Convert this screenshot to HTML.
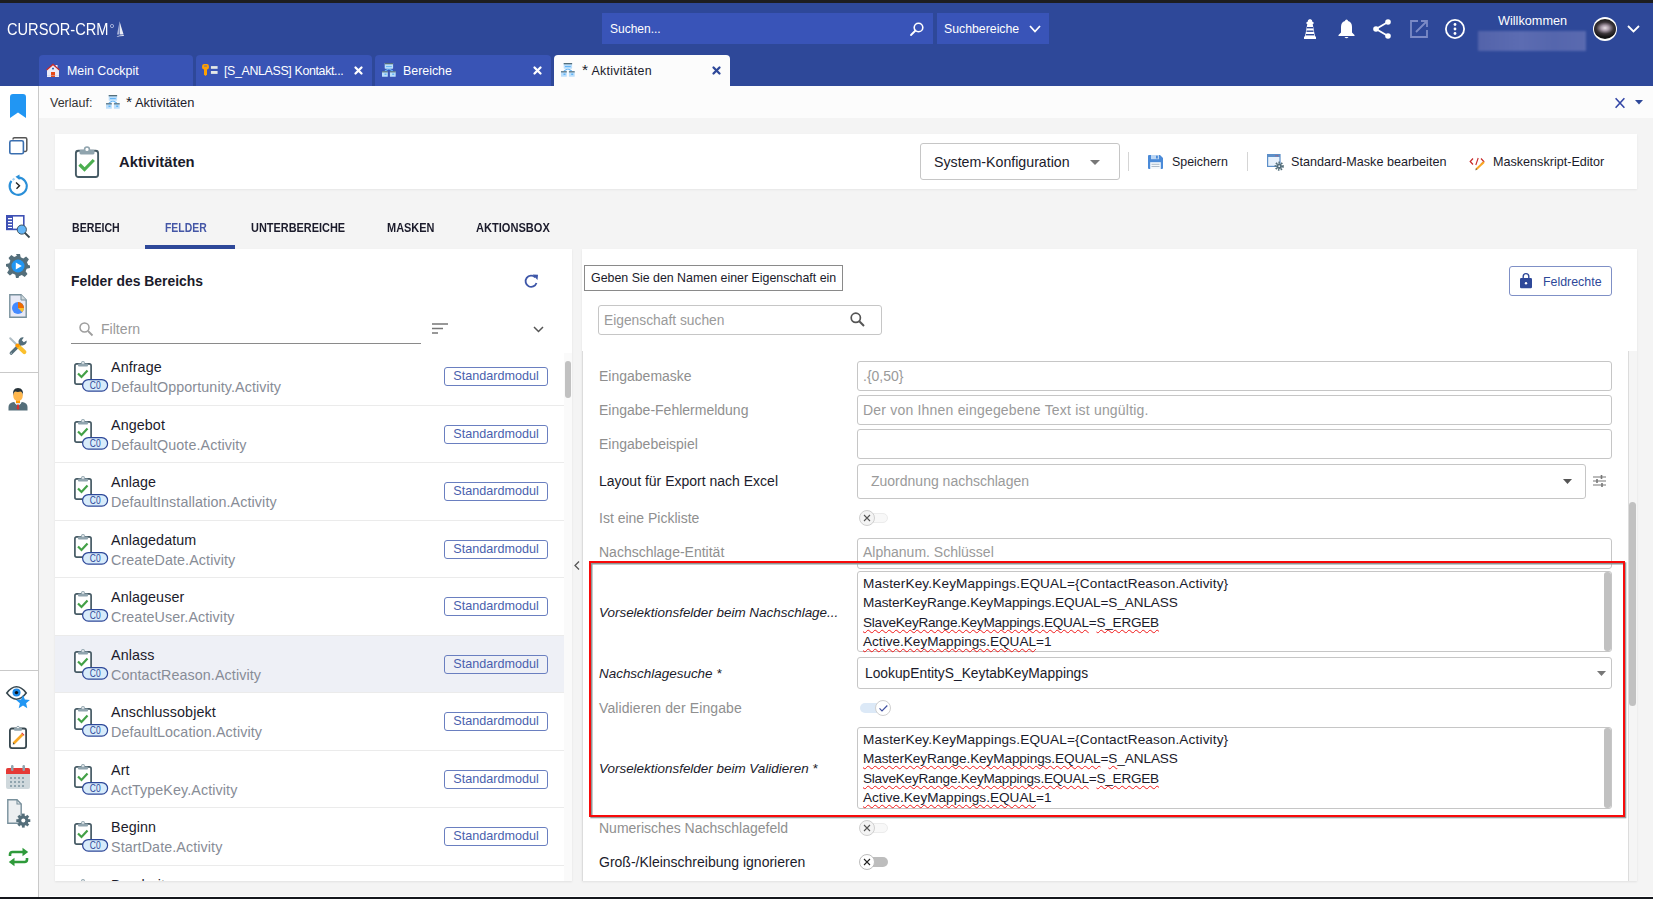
<!DOCTYPE html>
<html><head><meta charset="utf-8">
<style>
*{box-sizing:border-box;margin:0;padding:0}
html,body{width:1653px;height:899px;overflow:hidden;background:#f4f4f4;font-family:"Liberation Sans",sans-serif;color:#1b1b2b}
.a{position:absolute}
svg{position:absolute;overflow:visible}
.t{position:absolute;white-space:nowrap;line-height:1}
.tab{position:absolute;top:55px;height:31px;background:#3954b5;border-radius:4px 4px 0 0}
.tab .lbl{position:absolute;top:10px;font-size:12.4px;color:#fff;line-height:1;white-space:nowrap}
.tab svg{top:0;left:0}
.card{position:absolute;background:#fff}
.inp{position:absolute;border:1px solid #c6c6c6;border-radius:3px;background:#fff}
.lab{position:absolute;left:599px;font-size:14px;color:#8f8f8f;white-space:nowrap;line-height:1}
.lab.d{color:#1b1b2b}
.lab.i{font-style:italic;color:#1b1b2b;font-size:13.45px}
.val{position:absolute;left:863px;font-size:14px;color:#9a9a9a;white-space:nowrap;line-height:1}
.row{position:absolute;left:0;width:509px;border-bottom:1px solid #ebebeb}
.row .ti{position:absolute;left:56px;top:12px;font-size:14.3px;color:#1b1b2b;line-height:1;white-space:nowrap;letter-spacing:0.1px}
.row .su{position:absolute;left:56px;top:32px;font-size:14.3px;color:#878c96;line-height:1;white-space:nowrap;letter-spacing:0.1px}
.row .bd{position:absolute;left:389px;top:19px;width:104px;height:19px;border:1px solid #6a7fc0;border-radius:3px;font-size:12.6px;color:#4a5fae;line-height:17px;text-align:center;white-space:nowrap}
.row svg{left:19px;top:13px}
.w{text-decoration:underline wavy #f01818;text-decoration-thickness:1.3px;text-underline-offset:2px;text-decoration-skip-ink:none}
</style></head><body>
<div class="a" style="left:0;top:0;width:1653px;height:3px;background:#1d1d1f"></div>
<div class="a" style="left:0;top:3px;width:1653px;height:83px;background:#2e4899"></div>
<div class="a" style="left:0;top:896px;width:1653px;height:1px;background:#fff"></div><div class="a" style="left:0;top:897px;width:1653px;height:2px;background:#15171c"></div>

<!-- logo -->
<div class="t" style="left:7px;top:21px;font-size:16.5px;color:#fff;transform-origin:0 0;transform:scaleX(0.886)">CURSOR-CRM</div>
<div class="a" style="left:110px;top:24px;width:3.5px;height:3.5px;border-radius:50%;border:0.8px solid #b8c2e4"></div>
<svg style="left:115px;top:21px" width="10" height="17" viewBox="0 0 10 17"><path d="M4.5 0.3 L8.6 13.5 L4.8 13.5 Z" fill="#fff" opacity="0.9"/><path d="M4.3 2 L2 13.5 L4.3 13.5 Z" fill="#c9d0ea" opacity="0.8"/><path d="M0.3 15.8 Q4.5 14 9.2 14 L8.4 15 Q4.5 15.3 0.3 15.8 Z" fill="#fff"/></svg>

<!-- search -->
<div class="a" style="left:602px;top:13px;width:331px;height:31px;background:#3954b8"></div>
<div class="t" style="left:610px;top:23px;font-size:12px;color:#fff">Suchen...</div>
<svg style="left:910px;top:22px" width="14" height="14" viewBox="0 0 14 14"><circle cx="8.5" cy="5.5" r="4.3" fill="none" stroke="#fff" stroke-width="1.6"/><path d="M5.5 8.5 L1 13" stroke="#fff" stroke-width="1.8" stroke-linecap="round"/></svg>
<div class="a" style="left:937px;top:13px;width:112px;height:31px;background:#3954b8"></div>
<div class="t" style="left:944px;top:23px;font-size:12.3px;color:#fff">Suchbereiche</div>
<svg style="left:1029px;top:25px" width="12" height="8" viewBox="0 0 12 8"><path d="M1 1 L6 6.5 L11 1" fill="none" stroke="#fff" stroke-width="1.8"/></svg>

<!-- header right icons -->
<svg style="left:1304px;top:19px" width="12" height="20" viewBox="0 0 12 20"><path d="M6 0 Q8.5 0.5 8.5 3 L9.5 3 L9.5 5 L8.7 5 L11 17.5 L12 17.5 L12 20 L0 20 L0 17.5 L1 17.5 L3.3 5 L2.5 5 L2.5 3 L3.5 3 Q3.5 0.5 6 0 Z" fill="#fff"/><rect x="3" y="8" width="6" height="1.4" fill="#2e4899"/><rect x="2.5" y="11.5" width="7" height="1.4" fill="#2e4899"/><rect x="2" y="15" width="8" height="1.4" fill="#2e4899"/></svg>
<svg style="left:1338px;top:19px" width="17" height="20" viewBox="0 0 17 20"><path d="M8.5 0.5 Q10 0.5 10 2 Q14 3 14 8 L14 13.5 L16.5 16 L16.5 17 L0.5 17 L0.5 16 L3 13.5 L3 8 Q3 3 7 2 Q7 0.5 8.5 0.5 Z" fill="#fff"/><path d="M6.5 18 Q8.5 20.5 10.5 18 Z" fill="#fff"/></svg>
<svg style="left:1373px;top:19px" width="18" height="20" viewBox="0 0 18 20"><circle cx="15" cy="3" r="2.8" fill="#fff"/><circle cx="3" cy="10" r="2.8" fill="#fff"/><circle cx="15" cy="17" r="2.8" fill="#fff"/><path d="M15 3 L3 10 L15 17" fill="none" stroke="#fff" stroke-width="1.8"/></svg>
<svg style="left:1410px;top:20px" width="18" height="18" viewBox="0 0 18 18"><path d="M8 1 H1 V17 H17 V10" fill="none" stroke="#7b8ac6" stroke-width="1.8"/><path d="M11 1 H17 V7 M17 1 L6 12" fill="none" stroke="#7b8ac6" stroke-width="1.8"/></svg>
<svg style="left:1445px;top:19px" width="20" height="20" viewBox="0 0 20 20"><circle cx="10" cy="10" r="9.1" fill="none" stroke="#fff" stroke-width="1.8"/><circle cx="10" cy="5.5" r="1.4" fill="#fff"/><circle cx="10" cy="10" r="1.4" fill="#fff"/><circle cx="10" cy="14.5" r="1.4" fill="#fff"/></svg>
<div class="t" style="left:1498px;top:15px;font-size:12.7px;color:#fff">Willkommen</div>
<div class="a" style="left:1478px;top:31px;width:108px;height:20px;background:linear-gradient(90deg,#5363aa,#5c6cb2 40%,#5566ad 70%,#5a6ab0);filter:blur(1.2px)"></div>
<div class="a" style="left:1593px;top:17px;width:24px;height:24px;border-radius:50%;background:#fff"></div>
<div class="a" style="left:1594px;top:19px;width:22px;height:20px;border-radius:50%;background:radial-gradient(ellipse 60% 45% at 50% 45%,#e8e0e4 0,#a89aa8 30%,#3a3438 65%,#141414 100%)"></div>
<svg style="left:1627px;top:25px" width="13" height="8" viewBox="0 0 13 8"><path d="M1 1 L6.5 6.5 L12 1" fill="none" stroke="#fff" stroke-width="1.8"/></svg>

<!-- tabs -->
<div class="tab" style="left:39px;width:154px"><span class="lbl" style="left:28px">Mein Cockpit</span>
<svg style="left:7px;top:8px" width="14" height="14" viewBox="0 0 14 14"><rect x="9.5" y="2" width="2" height="3" fill="#eef"/><path d="M0.8 6.8 L1 7.2 V14 H13 V7.2 L13.2 6.8 L7 1.3 Z" fill="#ecebf6"/><path d="M0.2 6.6 L7 0.6 L13.8 6.6 L13 7.4 L7 2.2 L1 7.4 Z" fill="#c62828"/><rect x="6.2" y="4.8" width="1.6" height="1.6" fill="#0d47a1"/><rect x="5" y="9" width="4" height="5" fill="#e64a19"/><rect x="1" y="12.2" width="12" height="0.8" fill="#c5cae9" opacity="0.6"/></svg></div>
<div class="tab" style="left:196px;width:176px"><span class="lbl" style="left:28px;letter-spacing:-0.35px">[S_ANLASS] Kontakt...</span>
<svg style="left:6px;top:9px" width="16" height="12" viewBox="0 0 16 12"><rect x="0.1" y="0" width="6.8" height="5.6" rx="2" fill="#ffa000"/><rect x="2" y="1.6" width="3" height="1" rx="0.5" fill="#5a6db8"/><path d="M2 5 H5 V10.6 L3.5 11.9 L2 10.6 Z" fill="#ffa000"/><rect x="8.9" y="2.1" width="6.7" height="2.7" fill="#e4e8e6"/><rect x="8.9" y="7" width="6.7" height="2.9" fill="#e4e8e6"/></svg>
<svg style="left:158px;top:11px" width="9" height="9" viewBox="0 0 9 9"><path d="M1.5 1.5 L7.5 7.5 M7.5 1.5 L1.5 7.5" stroke="#fff" stroke-width="2.3" stroke-linecap="round"/></svg></div>
<div class="tab" style="left:375px;width:176px"><span class="lbl" style="left:28px">Bereiche</span>
<svg style="left:7px;top:8px" width="14" height="14" viewBox="0 0 14 14"><path d="M6.9 5.7 L2.9 8 M6.9 5.7 L10.8 8" stroke="#64b5f6" stroke-width="1.1"/><rect x="2.7" y="0" width="8.4" height="5.7" rx="0.6" fill="#bbdefb"/><rect x="2.7" y="0" width="8.4" height="1.3" fill="#546e7a"/><rect x="4" y="3" width="5.8" height="1.1" fill="#64b5f6"/><rect x="0" y="8.2" width="5.8" height="5.6" rx="0.6" fill="#bbdefb"/><rect x="0" y="8.2" width="5.8" height="1.2" fill="#546e7a"/><rect x="2.5" y="10.5" width="2" height="1.5" fill="#64b5f6"/><rect x="7.9" y="8.2" width="5.8" height="5.6" rx="0.6" fill="#bbdefb"/><rect x="7.9" y="8.2" width="5.8" height="1.2" fill="#546e7a"/><rect x="10.2" y="10.5" width="2" height="1.5" fill="#64b5f6"/></svg>
<svg style="left:158px;top:11px" width="9" height="9" viewBox="0 0 9 9"><path d="M1.5 1.5 L7.5 7.5 M7.5 1.5 L1.5 7.5" stroke="#fff" stroke-width="2.3" stroke-linecap="round"/></svg></div>
<div class="tab" style="left:554px;width:176px;background:#fcfcfc"><span class="lbl" style="left:28px;color:#1b1b2b;letter-spacing:0.3px"><span style="font-size:15.5px;line-height:10px">*</span> Aktivitäten</span>
<svg style="left:7px;top:8px" width="14" height="14" viewBox="0 0 14 14"><path d="M6.9 5.7 L2.9 8 M6.9 5.7 L10.8 8" stroke="#64b5f6" stroke-width="1.1"/><rect x="2.7" y="0" width="8.4" height="5.7" rx="0.6" fill="#bbdefb"/><rect x="2.7" y="0" width="8.4" height="1.3" fill="#546e7a"/><rect x="4" y="3" width="5.8" height="1.1" fill="#64b5f6"/><rect x="0" y="8.2" width="5.8" height="5.6" rx="0.6" fill="#bbdefb"/><rect x="0" y="8.2" width="5.8" height="1.2" fill="#546e7a"/><rect x="2.5" y="10.5" width="2" height="1.5" fill="#64b5f6"/><rect x="7.9" y="8.2" width="5.8" height="5.6" rx="0.6" fill="#bbdefb"/><rect x="7.9" y="8.2" width="5.8" height="1.2" fill="#546e7a"/><rect x="10.2" y="10.5" width="2" height="1.5" fill="#64b5f6"/></svg>
<svg style="left:158px;top:10.5px" width="9" height="9" viewBox="0 0 9 9"><path d="M1.5 1.5 L7.5 7.5 M7.5 1.5 L1.5 7.5" stroke="#2e4899" stroke-width="2.3" stroke-linecap="round"/></svg></div>

<!-- sidebar -->
<div class="a" style="left:0;top:86px;width:39px;height:811px;background:#fff;border-right:1px solid #c9c9c9"></div>
<div class="a" style="left:0;top:372px;width:38px;height:1px;background:#c9c9c9"></div>
<div class="a" style="left:0;top:670px;width:38px;height:1px;background:#c9c9c9"></div>
<svg style="left:10px;top:94px" width="16" height="24" viewBox="0 0 16 24"><path d="M0 3 Q0 0 3 0 H13 Q16 0 16 3 V24 L8 18.5 L0 24 Z" fill="#2196f3"/></svg>
<svg style="left:8px;top:137px" width="20" height="18" viewBox="0 0 20 18"><path d="M5 2.5 V2.2 Q5 0.8 6.4 0.8 H17.4 Q18.8 0.8 18.8 2.2 V13 Q18.8 14.4 17.4 14.4 H16" fill="none" stroke="#555" stroke-width="1.5"/><rect x="1.8" y="3.8" width="13.6" height="13" rx="1.6" fill="#fff" stroke="#3a6fb0" stroke-width="1.6"/></svg>
<svg style="left:7px;top:175px" width="22" height="22" viewBox="0 0 22 22"><path d="M11.5 2.6 A8.6 8.6 0 1 1 4.5 5.8" fill="none" stroke="#2a8fd8" stroke-width="2.1"/><path d="M8.5 1.8 L12.5 -0.5 L12.5 5 Z" fill="#2a8fd8"/><path d="M5.6 5 L7.5 3.6" stroke="#9fd0f3" stroke-width="2"/><path d="M9 7.5 L12.5 10.8 L9.5 13.8" fill="none" stroke="#222" stroke-width="1.4"/></svg>
<svg style="left:6px;top:215px" width="25" height="23" viewBox="0 0 25 23"><rect x="0.8" y="0.8" width="17" height="13.6" fill="#fff" stroke="#3f51b5" stroke-width="1.6"/><rect x="0.8" y="0.8" width="6.2" height="13.6" fill="#3f51b5"/><g fill="#fff"><rect x="2" y="3" width="4" height="1.3"/><rect x="2" y="6" width="4" height="1.3"/><rect x="2" y="9" width="4" height="1.3"/><rect x="2" y="12" width="4" height="1"/></g><path d="M18.5 17.5 L23.5 22.5" stroke="#37474f" stroke-width="1.8"/><circle cx="15.8" cy="14.6" r="4.6" fill="#64b5f6" stroke="#37474f" stroke-width="0.9"/></svg>
<svg style="left:6px;top:254px" width="24" height="24" viewBox="0 0 24 24"><path d="M10 0 H14 L14.7 3.3 L17.3 4.4 L20.1 2.5 L22.9 5.3 L21 8.2 L22.2 10.9 L24 11.5 V12.5 L24 14 L20.7 14.7 L19.6 17.3 L21.5 20.1 L18.7 22.9 L15.8 21 L13.1 22.2 L12.5 24 H10 L9.3 20.7 L6.7 19.6 L3.9 21.5 L1.1 18.7 L3 15.8 L1.8 13.1 L0 12.5 V10 L3.3 9.3 L4.4 6.7 L2.5 3.9 L5.3 1.1 L8.2 3 L10.9 1.8 Z" fill="#546e7a"/><circle cx="12" cy="12" r="6.5" fill="#2196f3"/><path d="M9.8 8.5 L15.8 12 L9.8 15.5 Z" fill="#fff"/></svg>
<svg style="left:9px;top:294px" width="18" height="24" viewBox="0 0 18 24"><path d="M0.8 0.8 H12 L17.2 6 V23.2 H0.8 Z" fill="#e8eaf6" stroke="#78909c" stroke-width="1.4"/><path d="M12 0.8 V6 H17.2" fill="#cfd8dc" stroke="#78909c" stroke-width="1"/><circle cx="9" cy="14" r="6" fill="#448aff"/><path d="M9 14 V8 A6 6 0 0 1 15 14 Z" fill="#ef6c00"/><path d="M9 14 H15 A6 6 0 0 1 13.2 18.3 Z" fill="#fbc02d"/></svg>
<svg style="left:9px;top:337px" width="18" height="18" viewBox="0 0 18 18"><path d="M2.2 16.2 L12 6.4" stroke="#546e7a" stroke-width="3.2" stroke-linecap="round"/><circle cx="2.2" cy="16.2" r="0.7" fill="#b0bec5"/><path d="M10.6 7.4 A4.3 4.3 0 0 1 14.8 0.4 L12.8 3.2 L14.8 5.2 L17.6 3.4 A4.3 4.3 0 0 1 10.6 7.4 Z" fill="#546e7a"/><path d="M1.2 1.2 L7.5 7.5" stroke="#b0bec5" stroke-width="2" stroke-linecap="round"/><path d="M9.5 9.5 L15.3 15" stroke="#fbc02d" stroke-width="4.2" stroke-linecap="round"/><circle cx="8.5" cy="8.5" r="2.1" fill="#ff9800"/></svg>
<svg style="left:8px;top:387px" width="20" height="24" viewBox="0 0 20 24"><path d="M0.5 23.5 V20 Q0.5 16 5.5 15 L10 17 L14.5 15 Q19.5 16 19.5 20 V23.5 Z" fill="#546e7a"/><path d="M7 15 L10 17.5 L13 15 L13 16.5 L10 19 L7 16.5 Z" fill="#fff"/><path d="M9.2 17.5 L10.8 17.5 L11.3 21.5 L10 23 L8.7 21.5 Z" fill="#d32f2f"/><rect x="8" y="12" width="4" height="4" fill="#ff9800"/><ellipse cx="10" cy="8.6" rx="4.8" ry="5.6" fill="#ffb74d"/><path d="M5 8.5 Q4.2 1 10 1 Q15.8 1 15 8.5 Q14.5 5 12.5 4.6 Q10 5.5 7.2 4.6 Q5.5 5 5 8.5 Z" fill="#263238"/></svg>
<svg style="left:6px;top:686px" width="25" height="24" viewBox="0 0 25 24"><path d="M0.8 7 Q5.5 0.8 10.5 0.8 Q15.5 0.8 20.2 7 Q15.5 13.2 10.5 13.2 Q5.5 13.2 0.8 7 Z" fill="#fff" stroke="#37474f" stroke-width="1.6"/><circle cx="10.5" cy="6.6" r="4" fill="#1e88e5"/><circle cx="10.5" cy="6.6" r="1.7" fill="#111"/><path d="M17 9 L18.9 13.6 L23.9 14 L20.1 17.2 L21.3 22.2 L17 19.5 L12.7 22.2 L13.9 17.2 L10.1 14 L15.1 13.6 Z" fill="#2196f3"/></svg>
<svg style="left:9px;top:726px" width="18" height="23" viewBox="0 0 18 23"><rect x="0.9" y="2.5" width="16.2" height="19.6" rx="2" fill="#fff" stroke="#37474f" stroke-width="1.8"/><rect x="5" y="1.8" width="8" height="3" rx="1" fill="#90a4ae"/><circle cx="9" cy="1.6" r="1.3" fill="#fff" stroke="#90a4ae" stroke-width="1"/><path d="M4.5 17.5 L13.5 8.5" stroke="#f9a825" stroke-width="2.6"/><path d="M12.3 7.3 L14.7 9.7 L15.5 8.9 L13.1 6.5 Z" fill="#e53935"/><path d="M3.8 18.5 L4.2 16.5 L5.6 17.9 Z" fill="#37474f"/></svg>
<svg style="left:6px;top:765px" width="24" height="24" viewBox="0 0 24 24"><rect x="0" y="3" width="24" height="21" rx="2" fill="#cfd8dc"/><path d="M0 5 Q0 3 2 3 H22 Q24 3 24 5 V9 H0 Z" fill="#e53935"/><rect x="5" y="0" width="2.5" height="6" rx="1.2" fill="#90a4ae"/><rect x="16.5" y="0" width="2.5" height="6" rx="1.2" fill="#90a4ae"/><g fill="#90a4ae"><rect x="4" y="12" width="2" height="2"/><rect x="8" y="12" width="2" height="2"/><rect x="12" y="12" width="2" height="2"/><rect x="16" y="12" width="2" height="2"/><rect x="4" y="16" width="2" height="2"/><rect x="8" y="16" width="2" height="2"/><rect x="12" y="16" width="2" height="2"/><rect x="16" y="16" width="2" height="2"/><rect x="4" y="20" width="2" height="2"/><rect x="8" y="20" width="2" height="2"/><rect x="12" y="20" width="2" height="2"/><rect x="16" y="20" width="2" height="2"/></g></svg>
<svg style="left:7px;top:799px" width="24" height="30" viewBox="0 0 24 30"><path d="M0.8 0.8 H10 L14.2 5 V24.2 H0.8 Z" fill="#eceff1" stroke="#78909c" stroke-width="1.4"/><path d="M10 0.8 V5 H14.2" fill="none" stroke="#78909c" stroke-width="1.1"/><g transform="translate(16.3 21.6)"><circle r="5.2" fill="#546e7a"/><g fill="#546e7a"><rect x="-1.4" y="-7" width="2.8" height="14"/><rect x="-7" y="-1.4" width="14" height="2.8"/><rect x="-1.4" y="-7" width="2.8" height="14" transform="rotate(45)"/><rect x="-1.4" y="-7" width="2.8" height="14" transform="rotate(-45)"/></g><circle r="2" fill="#fff"/></g></svg>
<svg style="left:8px;top:847px" width="21" height="20" viewBox="0 0 21 20"><path d="M2 9 V7.5 Q2 5 4.5 5 H16" fill="none" stroke="#2e9a3a" stroke-width="2.6"/><path d="M14.5 0.8 L20.2 5 L14.5 9.2 Z" fill="#2e9a3a"/><path d="M19 11 V12.5 Q19 15 16.5 15 H5" fill="none" stroke="#2e9a3a" stroke-width="2.6"/><path d="M6.5 10.8 L0.8 15 L6.5 19.2 Z" fill="#2e9a3a"/></svg>

<!-- verlauf -->
<div class="a" style="left:39px;top:86px;width:1614px;height:32px;background:#fcfcfc"></div>
<div class="t" style="left:50px;top:97px;font-size:12.5px;color:#333">Verlauf:</div>
<svg style="left:106px;top:95px" width="14" height="14" viewBox="0 0 14 14"><path d="M6.9 5.7 L2.9 8 M6.9 5.7 L10.8 8" stroke="#64b5f6" stroke-width="1.1"/><rect x="2.7" y="0" width="8.4" height="5.7" rx="0.6" fill="#bbdefb"/><rect x="2.7" y="0" width="8.4" height="1.3" fill="#546e7a"/><rect x="4" y="3" width="5.8" height="1.1" fill="#64b5f6"/><rect x="0" y="8.2" width="5.8" height="5.6" rx="0.6" fill="#bbdefb"/><rect x="0" y="8.2" width="5.8" height="1.2" fill="#546e7a"/><rect x="2.5" y="10.5" width="2" height="1.5" fill="#64b5f6"/><rect x="7.9" y="8.2" width="5.8" height="5.6" rx="0.6" fill="#bbdefb"/><rect x="7.9" y="8.2" width="5.8" height="1.2" fill="#546e7a"/><rect x="10.2" y="10.5" width="2" height="1.5" fill="#64b5f6"/></svg>
<div class="t" style="left:126px;top:97px;font-size:12.9px;color:#1b1b2b"><span style="font-size:15.5px;line-height:10px">*</span> Aktivitäten</div>
<svg style="left:1615px;top:98px" width="10" height="10" viewBox="0 0 10 10"><path d="M0.6 0.3 L9.4 9.7 M9.4 0.3 L0.6 9.7" stroke="#3346a6" stroke-width="1.6"/></svg>
<svg style="left:1635px;top:100px" width="8" height="5" viewBox="0 0 8 5"><path d="M0 0 H8 L4 4.5 Z" fill="#2e4899"/></svg>

<!-- header card -->
<div class="card" style="left:55px;top:134px;width:1582px;height:55px;box-shadow:0 1px 2px rgba(0,0,0,0.06)"></div>
<svg style="left:74px;top:146px" width="26" height="32" viewBox="0 0 26 32"><rect x="1.9" y="4.8" width="22.2" height="26.2" rx="2.5" fill="#fff" stroke="#455a64" stroke-width="1.9"/><rect x="5.5" y="3.8" width="15" height="4.6" rx="1.3" fill="#90a4ae"/><circle cx="13" cy="3.4" r="2.4" fill="#fff" stroke="#90a4ae" stroke-width="1.6"/><path d="M5.5 18.5 L10.5 23.5 L19.8 14" fill="none" stroke="#4caf50" stroke-width="3.2"/></svg>
<div class="t" style="left:119px;top:155px;font-size:14.8px;font-weight:bold">Aktivitäten</div>
<div class="a" style="left:920px;top:143px;width:200px;height:37px;border:1px solid #c6c6c6;border-radius:3px;background:#fff"></div>
<div class="t" style="left:934px;top:155px;font-size:14.2px">System-Konfiguration</div>
<svg style="left:1090px;top:160px" width="10" height="5" viewBox="0 0 10 5"><path d="M0 0 H10 L5 5 Z" fill="#777"/></svg>
<div class="a" style="left:1128px;top:152px;width:1px;height:19px;background:#d5d5d5"></div>
<svg style="left:1148px;top:155px" width="15" height="14" viewBox="0 0 15 14"><path d="M0 1 Q0 0 1 0 H12 L15 3 V13 Q15 14 14 14 H1 Q0 14 0 13 Z" fill="#4a8ad8"/><rect x="3" y="0" width="8" height="4.2" fill="#bcd6f3"/><rect x="8" y="0.7" width="1.8" height="2.8" fill="#4a8ad8"/><rect x="2.2" y="7.2" width="10.6" height="6.8" fill="#f4f8fc"/><path d="M3.5 9.3 H11.5 M3.5 11.5 H11.5" stroke="#9ab" stroke-width="0.8"/></svg>
<div class="t" style="left:1172px;top:156px;font-size:12.4px">Speichern</div>
<div class="a" style="left:1247px;top:152px;width:1px;height:19px;background:#d5d5d5"></div>
<svg style="left:1267px;top:154px" width="17" height="17" viewBox="0 0 17 17"><rect x="0.6" y="0.6" width="12.4" height="11.8" fill="#e8f1fb" stroke="#5c8fc9" stroke-width="1.2"/><rect x="0.6" y="0.6" width="12.4" height="2.4" fill="#5c8fc9"/><circle cx="9" cy="1.8" r="0.5" fill="#e53935"/><circle cx="10.8" cy="1.8" r="0.5" fill="#e53935"/><circle cx="12.2" cy="12.2" r="3.7" fill="none" stroke="#546e7a" stroke-width="1.8" stroke-dasharray="1.5 1.2"/><circle cx="12.2" cy="12.2" r="2.7" fill="#546e7a"/><circle cx="12.2" cy="12.2" r="0.9" fill="#e8f1fb"/></svg>
<div class="t" style="left:1291px;top:156px;font-size:12.6px">Standard-Maske bearbeiten</div>
<svg style="left:1469px;top:157px" width="17" height="14" viewBox="0 0 17 14"><path d="M4 1.5 L1.2 4.5 L4 7.5" fill="none" stroke="#c62828" stroke-width="1.2"/><path d="M12 1.5 L14.8 4.5 L12 7.5" fill="none" stroke="#c62828" stroke-width="1.2"/><path d="M6.8 8 L9.2 1" stroke="#c62828" stroke-width="1.1"/><path d="M7 12.5 L15 5" stroke="#f9a825" stroke-width="2"/><path d="M6 13.5 L7.3 11.2 L8.2 12.2 Z" fill="#555"/></svg>
<div class="t" style="left:1493px;top:156px;font-size:12.6px">Maskenskript-Editor</div>

<!-- tabs row -->
<div class="t" style="left:72px;top:222px;font-size:12.3px;font-weight:bold;transform-origin:0 0;transform:scaleX(0.862);color:#1b1b2b">BEREICH</div>
<div class="t" style="left:165px;top:222px;font-size:12.3px;font-weight:bold;transform-origin:0 0;transform:scaleX(0.848);color:#4456a6">FELDER</div>
<div class="t" style="left:251px;top:222px;font-size:12.3px;font-weight:bold;transform-origin:0 0;transform:scaleX(0.889);color:#1b1b2b">UNTERBEREICHE</div>
<div class="t" style="left:387px;top:222px;font-size:12.3px;font-weight:bold;transform-origin:0 0;transform:scaleX(0.891);color:#1b1b2b">MASKEN</div>
<div class="t" style="left:476px;top:222px;font-size:12.3px;font-weight:bold;transform-origin:0 0;transform:scaleX(0.901);color:#1b1b2b">AKTIONSBOX</div>
<div class="a" style="left:145px;top:245px;width:90px;height:4px;background:#2e4899"></div>

<!-- left panel -->
<div class="card" style="left:55px;top:249px;width:517px;height:632px;box-shadow:0 1px 2px rgba(0,0,0,0.08)"></div>
<div class="t" style="left:71px;top:275px;font-size:13.9px;font-weight:bold">Felder des Bereichs</div>
<svg style="left:524px;top:274px" width="15" height="15" viewBox="0 0 15 15"><path d="M12.5 9 A5.6 5.6 0 1 1 11.2 3.3" fill="none" stroke="#3d56a8" stroke-width="1.8"/><path d="M8.5 0.5 L14 0.8 L13.5 6 Z" fill="#3d56a8"/></svg>
<svg style="left:79px;top:322px" width="14" height="14" viewBox="0 0 14 14"><circle cx="5.5" cy="5.5" r="4.5" fill="none" stroke="#9e9e9e" stroke-width="1.5"/><path d="M9 9 L13.5 13.5" stroke="#9e9e9e" stroke-width="1.8"/></svg>
<div class="t" style="left:101px;top:322px;font-size:14.1px;color:#9a9a9a">Filtern</div>
<div class="a" style="left:71px;top:343px;width:350px;height:1px;background:#8a8a8a"></div>
<svg style="left:432px;top:323px" width="16" height="11" viewBox="0 0 16 11"><path d="M0 1 H16 M0 5.5 H11 M0 10 H6" stroke="#777" stroke-width="1.5"/></svg>
<svg style="left:533px;top:326px" width="11" height="7" viewBox="0 0 11 7"><path d="M1 1 L5.5 5.5 L10 1" fill="none" stroke="#555" stroke-width="1.5"/></svg>
<!--ROWS-->
<div class="a" style="left:55px;top:348px;width:509px;height:533px;overflow:hidden">
<div class="row" style="top:0px;height:58px;background:#fff"><svg width="34" height="31" viewBox="0 0 34 31"><rect x="0.9" y="2.9" width="16.2" height="20.2" rx="1.8" fill="#fff" stroke="#455a64" stroke-width="1.7"/><rect x="4" y="2.4" width="10" height="3" rx="1" fill="#90a4ae"/><circle cx="9" cy="1.9" r="1.4" fill="#fff" stroke="#90a4ae" stroke-width="1.1"/><path d="M4 12.5 L7.5 16 L13.5 9.5" fill="none" stroke="#43a047" stroke-width="2.2"/><rect x="8.6" y="18.6" width="25" height="11.5" rx="5.75" fill="#d8ecfb" stroke="#2e4899" stroke-width="1.2"/><text x="15.8" y="27.9" font-family="Liberation Sans" font-size="10.4" fill="#2e4899" textLength="10.8" lengthAdjust="spacingAndGlyphs">C0</text></svg><div class="ti">Anfrage</div><div class="su">DefaultOpportunity.Activity</div><div class="bd">Standardmodul</div></div>
<div class="row" style="top:58px;height:57px;background:#fff"><svg width="34" height="31" viewBox="0 0 34 31"><rect x="0.9" y="2.9" width="16.2" height="20.2" rx="1.8" fill="#fff" stroke="#455a64" stroke-width="1.7"/><rect x="4" y="2.4" width="10" height="3" rx="1" fill="#90a4ae"/><circle cx="9" cy="1.9" r="1.4" fill="#fff" stroke="#90a4ae" stroke-width="1.1"/><path d="M4 12.5 L7.5 16 L13.5 9.5" fill="none" stroke="#43a047" stroke-width="2.2"/><rect x="8.6" y="18.6" width="25" height="11.5" rx="5.75" fill="#d8ecfb" stroke="#2e4899" stroke-width="1.2"/><text x="15.8" y="27.9" font-family="Liberation Sans" font-size="10.4" fill="#2e4899" textLength="10.8" lengthAdjust="spacingAndGlyphs">C0</text></svg><div class="ti">Angebot</div><div class="su">DefaultQuote.Activity</div><div class="bd">Standardmodul</div></div>
<div class="row" style="top:115px;height:58px;background:#fff"><svg width="34" height="31" viewBox="0 0 34 31"><rect x="0.9" y="2.9" width="16.2" height="20.2" rx="1.8" fill="#fff" stroke="#455a64" stroke-width="1.7"/><rect x="4" y="2.4" width="10" height="3" rx="1" fill="#90a4ae"/><circle cx="9" cy="1.9" r="1.4" fill="#fff" stroke="#90a4ae" stroke-width="1.1"/><path d="M4 12.5 L7.5 16 L13.5 9.5" fill="none" stroke="#43a047" stroke-width="2.2"/><rect x="8.6" y="18.6" width="25" height="11.5" rx="5.75" fill="#d8ecfb" stroke="#2e4899" stroke-width="1.2"/><text x="15.8" y="27.9" font-family="Liberation Sans" font-size="10.4" fill="#2e4899" textLength="10.8" lengthAdjust="spacingAndGlyphs">C0</text></svg><div class="ti">Anlage</div><div class="su">DefaultInstallation.Activity</div><div class="bd">Standardmodul</div></div>
<div class="row" style="top:173px;height:57px;background:#fff"><svg width="34" height="31" viewBox="0 0 34 31"><rect x="0.9" y="2.9" width="16.2" height="20.2" rx="1.8" fill="#fff" stroke="#455a64" stroke-width="1.7"/><rect x="4" y="2.4" width="10" height="3" rx="1" fill="#90a4ae"/><circle cx="9" cy="1.9" r="1.4" fill="#fff" stroke="#90a4ae" stroke-width="1.1"/><path d="M4 12.5 L7.5 16 L13.5 9.5" fill="none" stroke="#43a047" stroke-width="2.2"/><rect x="8.6" y="18.6" width="25" height="11.5" rx="5.75" fill="#d8ecfb" stroke="#2e4899" stroke-width="1.2"/><text x="15.8" y="27.9" font-family="Liberation Sans" font-size="10.4" fill="#2e4899" textLength="10.8" lengthAdjust="spacingAndGlyphs">C0</text></svg><div class="ti">Anlagedatum</div><div class="su">CreateDate.Activity</div><div class="bd">Standardmodul</div></div>
<div class="row" style="top:230px;height:58px;background:#fff"><svg width="34" height="31" viewBox="0 0 34 31"><rect x="0.9" y="2.9" width="16.2" height="20.2" rx="1.8" fill="#fff" stroke="#455a64" stroke-width="1.7"/><rect x="4" y="2.4" width="10" height="3" rx="1" fill="#90a4ae"/><circle cx="9" cy="1.9" r="1.4" fill="#fff" stroke="#90a4ae" stroke-width="1.1"/><path d="M4 12.5 L7.5 16 L13.5 9.5" fill="none" stroke="#43a047" stroke-width="2.2"/><rect x="8.6" y="18.6" width="25" height="11.5" rx="5.75" fill="#d8ecfb" stroke="#2e4899" stroke-width="1.2"/><text x="15.8" y="27.9" font-family="Liberation Sans" font-size="10.4" fill="#2e4899" textLength="10.8" lengthAdjust="spacingAndGlyphs">C0</text></svg><div class="ti">Anlageuser</div><div class="su">CreateUser.Activity</div><div class="bd">Standardmodul</div></div>
<div class="row" style="top:288px;height:57px;background:#eef0f6"><svg width="34" height="31" viewBox="0 0 34 31"><rect x="0.9" y="2.9" width="16.2" height="20.2" rx="1.8" fill="#fff" stroke="#455a64" stroke-width="1.7"/><rect x="4" y="2.4" width="10" height="3" rx="1" fill="#90a4ae"/><circle cx="9" cy="1.9" r="1.4" fill="#fff" stroke="#90a4ae" stroke-width="1.1"/><path d="M4 12.5 L7.5 16 L13.5 9.5" fill="none" stroke="#43a047" stroke-width="2.2"/><rect x="8.6" y="18.6" width="25" height="11.5" rx="5.75" fill="#d8ecfb" stroke="#2e4899" stroke-width="1.2"/><text x="15.8" y="27.9" font-family="Liberation Sans" font-size="10.4" fill="#2e4899" textLength="10.8" lengthAdjust="spacingAndGlyphs">C0</text></svg><div class="ti">Anlass</div><div class="su">ContactReason.Activity</div><div class="bd">Standardmodul</div></div>
<div class="row" style="top:345px;height:58px;background:#fff"><svg width="34" height="31" viewBox="0 0 34 31"><rect x="0.9" y="2.9" width="16.2" height="20.2" rx="1.8" fill="#fff" stroke="#455a64" stroke-width="1.7"/><rect x="4" y="2.4" width="10" height="3" rx="1" fill="#90a4ae"/><circle cx="9" cy="1.9" r="1.4" fill="#fff" stroke="#90a4ae" stroke-width="1.1"/><path d="M4 12.5 L7.5 16 L13.5 9.5" fill="none" stroke="#43a047" stroke-width="2.2"/><rect x="8.6" y="18.6" width="25" height="11.5" rx="5.75" fill="#d8ecfb" stroke="#2e4899" stroke-width="1.2"/><text x="15.8" y="27.9" font-family="Liberation Sans" font-size="10.4" fill="#2e4899" textLength="10.8" lengthAdjust="spacingAndGlyphs">C0</text></svg><div class="ti">Anschlussobjekt</div><div class="su">DefaultLocation.Activity</div><div class="bd">Standardmodul</div></div>
<div class="row" style="top:403px;height:57px;background:#fff"><svg width="34" height="31" viewBox="0 0 34 31"><rect x="0.9" y="2.9" width="16.2" height="20.2" rx="1.8" fill="#fff" stroke="#455a64" stroke-width="1.7"/><rect x="4" y="2.4" width="10" height="3" rx="1" fill="#90a4ae"/><circle cx="9" cy="1.9" r="1.4" fill="#fff" stroke="#90a4ae" stroke-width="1.1"/><path d="M4 12.5 L7.5 16 L13.5 9.5" fill="none" stroke="#43a047" stroke-width="2.2"/><rect x="8.6" y="18.6" width="25" height="11.5" rx="5.75" fill="#d8ecfb" stroke="#2e4899" stroke-width="1.2"/><text x="15.8" y="27.9" font-family="Liberation Sans" font-size="10.4" fill="#2e4899" textLength="10.8" lengthAdjust="spacingAndGlyphs">C0</text></svg><div class="ti">Art</div><div class="su">ActTypeKey.Activity</div><div class="bd">Standardmodul</div></div>
<div class="row" style="top:460px;height:58px;background:#fff"><svg width="34" height="31" viewBox="0 0 34 31"><rect x="0.9" y="2.9" width="16.2" height="20.2" rx="1.8" fill="#fff" stroke="#455a64" stroke-width="1.7"/><rect x="4" y="2.4" width="10" height="3" rx="1" fill="#90a4ae"/><circle cx="9" cy="1.9" r="1.4" fill="#fff" stroke="#90a4ae" stroke-width="1.1"/><path d="M4 12.5 L7.5 16 L13.5 9.5" fill="none" stroke="#43a047" stroke-width="2.2"/><rect x="8.6" y="18.6" width="25" height="11.5" rx="5.75" fill="#d8ecfb" stroke="#2e4899" stroke-width="1.2"/><text x="15.8" y="27.9" font-family="Liberation Sans" font-size="10.4" fill="#2e4899" textLength="10.8" lengthAdjust="spacingAndGlyphs">C0</text></svg><div class="ti">Beginn</div><div class="su">StartDate.Activity</div><div class="bd">Standardmodul</div></div>
<div class="row" style="top:518px;height:57px;background:#fff"><svg width="34" height="31" viewBox="0 0 34 31"><rect x="0.9" y="2.9" width="16.2" height="20.2" rx="1.8" fill="#fff" stroke="#455a64" stroke-width="1.7"/><rect x="4" y="2.4" width="10" height="3" rx="1" fill="#90a4ae"/><circle cx="9" cy="1.9" r="1.4" fill="#fff" stroke="#90a4ae" stroke-width="1.1"/><path d="M4 12.5 L7.5 16 L13.5 9.5" fill="none" stroke="#43a047" stroke-width="2.2"/><rect x="8.6" y="18.6" width="25" height="11.5" rx="5.75" fill="#d8ecfb" stroke="#2e4899" stroke-width="1.2"/><text x="15.8" y="27.9" font-family="Liberation Sans" font-size="10.4" fill="#2e4899" textLength="10.8" lengthAdjust="spacingAndGlyphs">C0</text></svg><div class="ti">Bearbeiter</div><div class="su">EditUser.Activity</div><div class="bd">Standardmodul</div></div>
</div>
<!--/ROWS-->
<div class="a" style="left:564px;top:353px;width:8px;height:528px;background:#fafafa"></div>
<div class="a" style="left:565px;top:361px;width:6px;height:37px;border-radius:3px;background:#c1c1c1"></div>
<svg style="left:574px;top:560.5px" width="6" height="9" viewBox="0 0 6 9"><path d="M5 0.5 L1 4.5 L5 8.5" fill="none" stroke="#555" stroke-width="1.3"/></svg>

<!-- right panel -->
<div class="card" style="left:582px;top:249px;width:1055px;height:632px;box-shadow:0 1px 2px rgba(0,0,0,0.08)"></div>
<div class="a" style="left:584px;top:265px;width:259px;height:26px;border:1px solid #8a8a8a;background:#fff"></div>
<div class="t" style="left:591px;top:272px;font-size:12.4px;color:#1b1b2b">Geben Sie den Namen einer Eigenschaft ein</div>
<div class="inp" style="left:598px;top:305px;width:284px;height:30px"></div>
<div class="t" style="left:604px;top:314px;font-size:13.8px;color:#9a9a9a">Eigenschaft suchen</div>
<svg style="left:850px;top:312px" width="15" height="15" viewBox="0 0 15 15"><circle cx="5.8" cy="5.8" r="4.6" fill="none" stroke="#555" stroke-width="1.7"/><path d="M9.3 9.3 L14 14" stroke="#555" stroke-width="2"/></svg>
<div class="a" style="left:1509px;top:266px;width:103px;height:30px;border:1px solid #7f90c6;border-radius:3px"></div>
<svg style="left:1520px;top:272px" width="12" height="17" viewBox="0 0 12 17"><path d="M3.2 7 V4.6 Q3.2 1.6 6 1.6 Q8.8 1.6 8.8 4.6 V7" fill="none" stroke="#2e4899" stroke-width="1.4"/><rect x="0" y="6" width="12" height="10.3" rx="1.2" fill="#2e4899"/><circle cx="6" cy="11.2" r="1.2" fill="#fff"/></svg>
<div class="t" style="left:1543px;top:276px;font-size:12.4px;color:#2e4899">Feldrechte</div>

<!-- scroll area borders -->
<div class="a" style="left:582px;top:351px;width:1px;height:530px;background:#dcdcdc"></div>
<div class="a" style="left:1628px;top:351px;width:1px;height:530px;background:#dcdcdc"></div>
<div class="a" style="left:1629px;top:351px;width:8px;height:530px;background:#f5f5f5"></div>
<div class="a" style="left:1629px;top:502px;width:7px;height:204px;border-radius:3.5px;background:#c1c1c1"></div>

<!-- form -->
<div class="lab" style="top:369px">Eingabemaske</div>
<div class="inp" style="left:857px;top:361px;width:755px;height:30px"></div>
<div class="val" style="top:369px">.{0,50}</div>

<div class="lab" style="top:403px">Eingabe-Fehlermeldung</div>
<div class="inp" style="left:857px;top:395px;width:755px;height:30px"></div>
<div class="val" style="top:403px;letter-spacing:0.2px">Der von Ihnen eingegebene Text ist ungültig.</div>

<div class="lab" style="top:437px">Eingabebeispiel</div>
<div class="inp" style="left:857px;top:429px;width:755px;height:30px"></div>

<div class="lab d" style="top:474px">Layout für Export nach Excel</div>
<div class="inp" style="left:857px;top:464px;width:729px;height:35px"></div>
<div class="val" style="left:871px;top:474px">Zuordnung nachschlagen</div>
<svg style="left:1563px;top:479px" width="9" height="5" viewBox="0 0 9 5"><path d="M0 0 H9 L4.5 5 Z" fill="#555"/></svg>
<svg style="left:1593px;top:475px" width="13" height="12" viewBox="0 0 13 12"><path d="M0 2 H13 M0 6 H13 M0 10 H13" stroke="#777" stroke-width="1.2"/><path d="M8.5 0 V4 M4 4 V8 M9 8 V12" stroke="#777" stroke-width="1.6"/></svg>

<div class="lab" style="top:511px">Ist eine Pickliste</div>
<div class="a" style="left:866px;top:513px;width:22px;height:10px;border-radius:5px;background:#f8f8f8;border:1px solid #ececec"></div>
<div class="a" style="left:859px;top:510px;width:16px;height:16px;border-radius:50%;background:#f4f4f4;border:1px solid #cfcfcf"></div>
<svg style="left:863px;top:514px" width="8" height="8" viewBox="0 0 8 8"><path d="M1 1 L7 7 M7 1 L1 7" stroke="#555" stroke-width="1.1"/></svg>

<div class="lab" style="top:545px">Nachschlage-Entität</div>
<div class="inp" style="left:857px;top:538px;width:755px;height:31px"></div>
<div class="val" style="top:545px">Alphanum. Schlüssel</div>

<div class="lab i" style="top:606px">Vorselektionsfelder beim Nachschlage...</div>
<div class="inp" style="left:857px;top:571px;width:755px;height:81px"></div>
<div class="a" style="left:1604px;top:572px;width:7px;height:79px;border-radius:3px;background:#c1c1c1"></div>
<div class="a ta" style="left:863px;top:574px;font-size:13.6px;line-height:19.3px;color:#1b1b2b;white-space:pre"><div style="letter-spacing:0.15px">MasterKey.KeyMappings.EQUAL={ContactReason.Activity}</div><div style="letter-spacing:-0.11px">MasterKeyRange.KeyMappings.EQUAL=S_ANLASS</div><div style="letter-spacing:-0.25px"><span class="w">SlaveKeyRange.KeyMappings.EQUAL</span>=<span class="w">S_ERGEB</span></div><div><span class="w">Active.KeyMappings.EQUAL</span>=1</div></div>

<div class="lab i" style="top:667px">Nachschlagesuche *</div>
<div class="inp" style="left:857px;top:657px;width:755px;height:32px"></div>
<div class="t" style="left:865px;top:667px;font-size:13.8px;color:#1b1b2b">LookupEntityS_KeytabKeyMappings</div>
<svg style="left:1597px;top:671px" width="9" height="5" viewBox="0 0 9 5"><path d="M0 0 H9 L4.5 5 Z" fill="#777"/></svg>

<div class="lab" style="top:701px;letter-spacing:0.1px">Validieren der Eingabe</div>
<div class="a" style="left:860px;top:703px;width:22px;height:10px;border-radius:5px;background:#dce9f7"></div>
<div class="a" style="left:875px;top:700px;width:16px;height:16px;border-radius:50%;background:#fff;border:1px solid #cfcfcf"></div>
<svg style="left:879px;top:705px" width="9" height="7" viewBox="0 0 9 7"><path d="M0.5 3.3 L3 5.8 L8.3 0.5" fill="none" stroke="#4050a0" stroke-width="1.2"/></svg>

<div class="lab i" style="top:762px">Vorselektionsfelder beim Validieren *</div>
<div class="inp" style="left:857px;top:727px;width:755px;height:82px"></div>
<div class="a" style="left:1604px;top:728px;width:7px;height:80px;border-radius:3px;background:#c1c1c1"></div>
<div class="a ta" style="left:863px;top:730px;font-size:13.6px;line-height:19.3px;color:#1b1b2b;white-space:pre"><div style="letter-spacing:0.15px">MasterKey.KeyMappings.EQUAL={ContactReason.Activity}</div><div style="letter-spacing:-0.11px"><span class="w">MasterKeyRange.KeyMappings.EQUAL</span>=<span class="w">S</span>_ANLASS</div><div style="letter-spacing:-0.25px"><span class="w">SlaveKeyRange.KeyMappings.EQUAL</span>=<span class="w">S_ERGEB</span></div><div><span class="w">Active.KeyMappings.EQUAL</span>=1</div></div>

<!-- red box -->
<div class="a" style="left:589px;top:561px;width:1036px;height:256px;border:2.4px solid #f80a0a;box-shadow:inset 1.5px 1.5px 0 #8f9494,1.3px 1.3px 0 #9a9e9e"></div>

<div class="lab" style="top:821px">Numerisches Nachschlagefeld</div>
<div class="a" style="left:866px;top:823px;width:22px;height:10px;border-radius:5px;background:#f8f8f8;border:1px solid #ececec"></div>
<div class="a" style="left:859px;top:820px;width:16px;height:16px;border-radius:50%;background:#f4f4f4;border:1px solid #cfcfcf"></div>
<svg style="left:863px;top:824px" width="8" height="8" viewBox="0 0 8 8"><path d="M1 1 L7 7 M7 1 L1 7" stroke="#555" stroke-width="1.1"/></svg>

<div class="lab d" style="top:855px">Groß-/Kleinschreibung ignorieren</div>
<div class="a" style="left:866px;top:857px;width:22px;height:10px;border-radius:5px;background:#bdbdbd"></div>
<div class="a" style="left:859px;top:854px;width:16px;height:16px;border-radius:50%;background:#fff;border:1px solid #bdbdbd"></div>
<svg style="left:863px;top:858px" width="8" height="8" viewBox="0 0 8 8"><path d="M1 1 L7 7 M7 1 L1 7" stroke="#222" stroke-width="1.1"/></svg>
</body></html>
